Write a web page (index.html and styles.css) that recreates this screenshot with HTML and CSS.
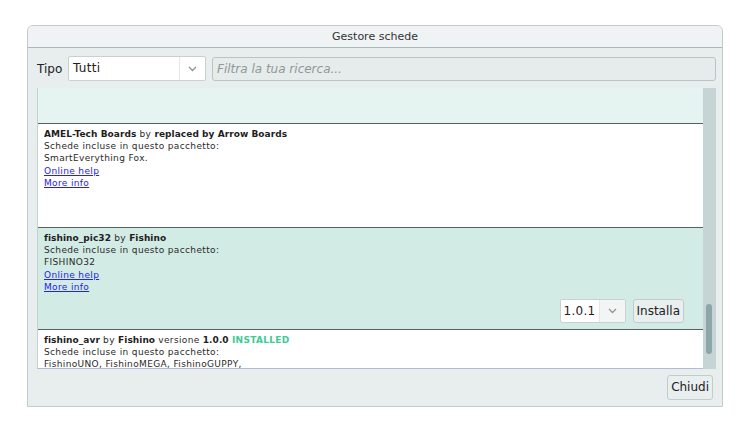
FILE: index.html
```html
<!DOCTYPE html>
<html>
<head>
<meta charset="utf-8">
<link rel="stylesheet" href="styles.css">
</head>
<body>
<div class="window">
  <div class="titlebar">Gestore schede</div>
  <div class="content">
    <div class="toolbar">
      <span class="lbl">Tipo</span>
      <div class="combo type-combo">
        <span class="combo-text">Tutti</span>
        <span class="combo-arrow"><svg width="9" height="6" viewBox="0 0 9 6"><path d="M1 1 L4.5 4.5 L8 1" fill="none" stroke="#8a9696" stroke-width="1.3"/></svg></span>
      </div>
      <div class="filter">Filtra la tua ricerca...</div>
    </div>
    <div class="listwrap">
      <div class="list">
        <div class="item partial"></div>
        <div class="item white">
          <div class="line"><b>AMEL-Tech Boards</b> by <b>replaced by Arrow Boards</b></div>
          <div class="line">Schede incluse in questo pacchetto:</div>
          <div class="line">SmartEverything Fox.</div>
          <div class="line"><a class="link">Online help</a></div>
          <div class="line"><a class="link">More info</a></div>
        </div>
        <div class="item teal">
          <div class="line"><b>fishino_pic32</b> by <b>Fishino</b></div>
          <div class="line">Schede incluse in questo pacchetto:</div>
          <div class="line">FISHINO32</div>
          <div class="line"><a class="link">Online help</a></div>
          <div class="line"><a class="link">More info</a></div>
          <div class="actions">
            <div class="combo ver-combo">
              <span class="combo-text">1.0.1</span>
              <span class="combo-arrow"><svg width="9" height="6" viewBox="0 0 9 6"><path d="M1 1 L4.5 4.5 L8 1" fill="none" stroke="#8a9696" stroke-width="1.3"/></svg></span>
            </div>
            <div class="btn install">Installa</div>
          </div>
        </div>
        <div class="item white last">
          <div class="line"><b>fishino_avr</b> by <b>Fishino</b> versione <b>1.0.0</b> <b class="installed">INSTALLED</b></div>
          <div class="line">Schede incluse in questo pacchetto:</div>
          <div class="line">FishinoUNO, FishinoMEGA, FishinoGUPPY,</div>
        </div>
      </div>
      <div class="scrollbar"><div class="thumb"></div></div>
    </div>
    <div class="bottom">
      <div class="btn close">Chiudi</div>
    </div>
  </div>
</div>
</body>
</html>
```
FILE: styles.css
```css
html, body {
  margin: 0;
  padding: 0;
  background: #ffffff;
}
body {
  font-family: "DejaVu Sans", sans-serif;
  color: #222;
}
.window {
  margin: 25px 0 0 27px;
  width: 696px;
  height: 382px;
  box-sizing: border-box;
  border: 1px solid #c3cccc;
  border-radius: 6px 6px 0 0;
  background: #e8eded;
  display: flex;
  flex-direction: column;
  overflow: hidden;
}
.titlebar {
  height: 21px;
  line-height: 21px;
  background: #f0f3f3;
  border-bottom: 1px solid #a8b8b8;
  text-align: center;
  font-size: 11px;
  color: #333;
}
.content {
  flex: 1;
  display: flex;
  flex-direction: column;
  padding: 8px 6px 0 9px;
}
.toolbar {
  display: flex;
  align-items: center;
  height: 25px;
}
.lbl {
  font-size: 12px;
  color: #222;
  width: 31px;
}
.combo {
  display: flex;
  background: #fff;
  border: 1px solid #c8d0d0;
  border-radius: 2px;
  box-sizing: border-box;
}
.type-combo {
  width: 138px;
  height: 25px;
}
.combo-text {
  flex: 1;
  font-size: 12px;
  line-height: 23px;
  padding-left: 4px;
  color: #222;
  letter-spacing: 0.3px;
}
.combo-arrow {
  width: 25px;
  display: flex;
  align-items: center;
  justify-content: center;
  border-left: 1px solid #e2e7e7;
}
.filter {
  flex: 1;
  margin-left: 6px;
  height: 24px;
  box-sizing: border-box;
  border: 1px solid #b9c4c4;
  border-radius: 3px;
  background: #e6ebeb;
  font-size: 12px;
  font-style: italic;
  color: #8e9898;
  line-height: 22px;
  padding-left: 4px;
}
.listwrap {
  margin-top: 7px;
  display: flex;
  height: 281px;
}
.list {
  flex: 1;
  display: flex;
  flex-direction: column;
  overflow: hidden;
  border-left: 1px solid #c4cfcf;
  border-bottom: 1px solid #b9b9d6;
}
.item {
  padding: 4px 0 0 6px;
  font-size: 9px;
  box-sizing: border-box;
  border-bottom: 1px solid #56635f;
  position: relative;
  flex-shrink: 0;
  letter-spacing: 0.35px;
  color: #2a2a2a;
}
.item b {
  letter-spacing: 0.05px;
  color: #1e1e1e;
}
.line {
  line-height: 12.2px;
  height: 12.2px;
  white-space: nowrap;
}
.partial {
  height: 36px;
  background: #e6f4f1;
  padding: 0;
}
.white {
  background: #ffffff;
  height: 104px;
}
.teal {
  background: #d2ebe5;
  height: 102px;
}
.last {
  border-bottom: none;
  height: 50px;
}
.link {
  color: #2222ee;
  text-decoration: underline;
}
.item b.installed {
  color: #3dcb97;
  letter-spacing: 0.3px;
}
.actions {
  position: absolute;
  right: 19px;
  bottom: 6px;
  display: flex;
  gap: 7px;
  letter-spacing: 0;
}
.ver-combo {
  width: 66px;
  height: 24px;
}
.ver-combo .combo-text {
  font-size: 12px;
  line-height: 22px;
  padding-left: 3px;
}
.ver-combo .combo-arrow {
  background: #f3f5f5;
}
.btn {
  height: 24px;
  box-sizing: border-box;
  border: 1px solid #c3cccc;
  border-radius: 3px;
  background: #e9eeee;
  font-size: 12px;
  line-height: 22px;
  padding: 0 5px;
  color: #222;
}
.install {
  padding: 0 3px;
}
.scrollbar {
  width: 13px;
  background: #c6d4d6;
  position: relative;
}
.thumb {
  position: absolute;
  left: 3px;
  top: 216px;
  width: 6px;
  height: 50px;
  border-radius: 3px;
  background: #8ea6aa;
}
.bottom {
  display: flex;
  justify-content: flex-end;
  padding-top: 6px;
  padding-right: 3px;
}
.close {
  height: 25px;
  line-height: 23px;
  padding: 0 3px;
}
```
